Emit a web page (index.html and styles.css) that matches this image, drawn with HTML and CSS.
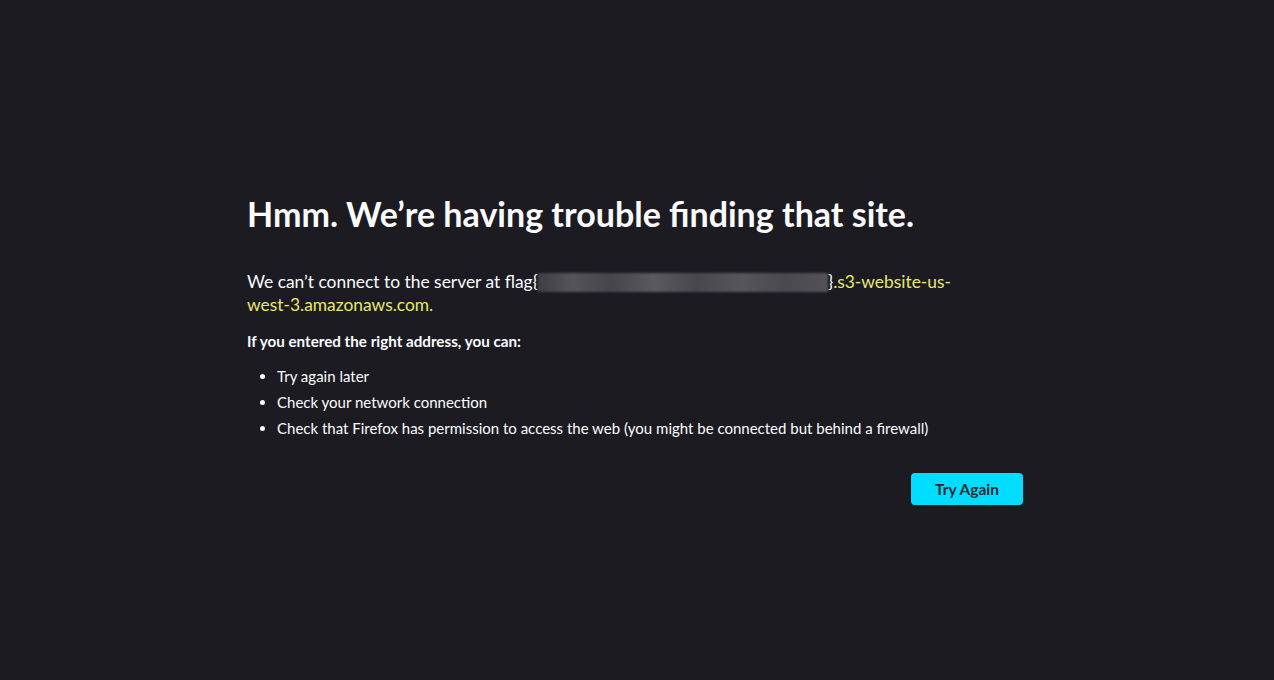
FILE: index.html
```html
<!DOCTYPE html>
<html lang="en">
<head>
    <meta charset="UTF-8">
    <meta name="viewport" content="width=device-width, initial-scale=1.0">
    <title>Server Not Found</title>
    <link rel="stylesheet" href="styles.css">
</head>
<body>
    <div class="container">
        <h1 class="title">Hmm. We’re having trouble finding that site.</h1>

        <p class="intro">We can’t connect to the server at flag{<span class="hidden-part"></span>}<span class="host">.s3-website-us-west-3.amazonaws.com.</span></p>

        <p class="hint">If you entered the right address, you can:</p>
        <ul class="tips">
            <li>Try again later</li>
            <li>Check your network connection</li>
            <li>Check that Firefox has permission to access the web (you might be connected but behind a firewall)</li>
        </ul>

        <div class="actions">
            <button class="try-again">Try Again</button>
        </div>
    </div>
</body>
</html>
```

FILE: styles.css
```css
body {
    font-family: Lato, "Open Sans", sans-serif;
    margin: 0;
    padding: 0;
    background-color: #1c1b22;
    color: #fbfbfe;
    height: 100vh;
    overflow: hidden;
}

.container {
    width: 780px;
    margin: 0 auto;
    padding-top: 192px;
}

.title {
    font-size: 34px;
    font-weight: 700;
    line-height: 44px;
    margin: 0 0 34px;
}

.intro {
    max-width: 720px;
    font-size: 17.4px;
    line-height: 23px;
    margin: 0 0 16px;
}

.host {
    color: #e8e86c;
}

.hidden-part {
    display: inline-block;
    width: 290px;
    height: 19px;
    vertical-align: -4px;
    background: linear-gradient(90deg, #3f3e45, #55545b 12%, #46454c 25%, #5a595f 40%, #48474e 55%, #57565c 70%, #4a4950 85%, #535258);
    filter: blur(1px);
}

.hint {
    font-size: 15.2px;
    font-weight: 700;
    margin: 0 0 16px;
}

.tips {
    font-size: 15px;
    line-height: 20px;
    margin: 0;
    padding-left: 30px;
}

.tips li {
    margin-bottom: 6px;
}

.actions {
    display: flex;
    justify-content: flex-end;
    margin-top: 35px;
    padding-right: 4px;
}

.try-again {
    font-family: inherit;
    font-size: 15.5px;
    font-weight: 700;
    color: #2b2a33;
    background-color: #00ddff;
    border: none;
    border-radius: 4px;
    width: 112px;
    height: 32px;
    cursor: pointer;
}
```
